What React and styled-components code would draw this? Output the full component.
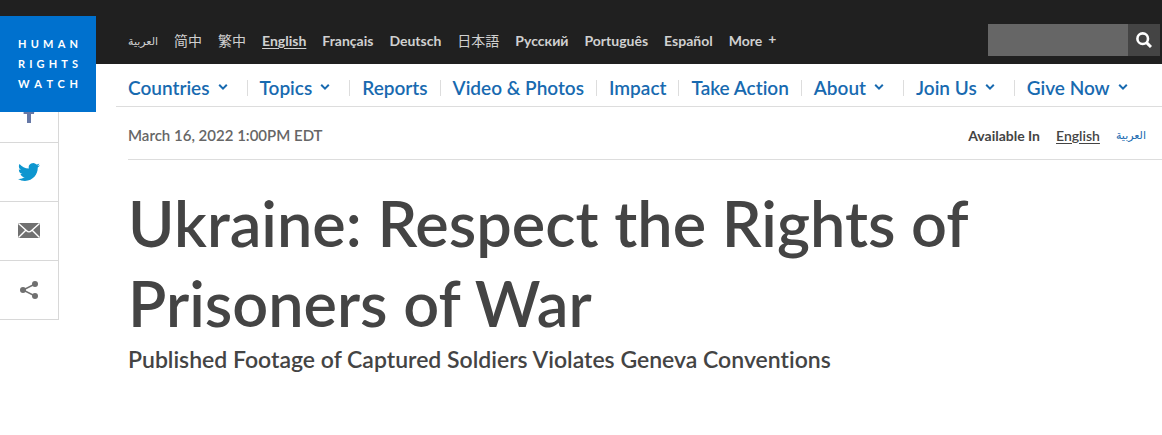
import React, { useState } from 'react'
import styled, { createGlobalStyle } from 'styled-components'

const languages = [
    { label: 'العربية', lang: 'ar' },
    { label: '简中', lang: 'zh-Hans' },
    { label: '繁中', lang: 'zh-Hant' },
    { label: 'English', lang: 'en', active: true },
    { label: 'Français', lang: 'fr' },
    { label: 'Deutsch', lang: 'de' },
    { label: '日本語', lang: 'ja' },
    { label: 'Русский', lang: 'ru' },
    { label: 'Português', lang: 'pt' },
    { label: 'Español', lang: 'es' },
]

const menu = [
    { label: 'Countries', sub: true },
    { label: 'Topics', sub: true },
    { label: 'Reports' },
    { label: 'Video & Photos' },
    { label: 'Impact' },
    { label: 'Take Action' },
    { label: 'About', sub: true },
    { label: 'Join Us', sub: true },
    { label: 'Give Now', sub: true },
]

const logoWords = ['HUMAN', 'RIGHTS', 'WATCH']

const Chevron = () => (
    <svg width="10" height="8" viewBox="0 0 10 8" aria-hidden="true">
        <path d="M1.2 0.8 L5 4.6 L8.8 0.8" fill="none" stroke="currentColor" strokeWidth="2" />
    </svg>
)

const FacebookIcon = () => (
    <svg width="12" height="20" viewBox="0 0 12 20" aria-hidden="true">
        <path d="M4 20V11H0.6V7.4H4V4.8C4 1.6 5.8 0 8.6 0H11.4V3.4H9.6C8.2 3.4 8 4 8 5.2V7.4H11.4L11 11H8V20Z" fill="#6678a6" />
    </svg>
)

const TwitterIcon = () => (
    <svg width="22" height="22" viewBox="0 0 24 24" aria-hidden="true">
        <path d="M23.95 4.57a10 10 0 0 1-2.82.77 4.96 4.96 0 0 0 2.16-2.72c-.95.55-2 .95-3.13 1.18a4.92 4.92 0 0 0-8.38 4.48C7.69 8.1 4.07 6.13 1.64 3.16a4.82 4.82 0 0 0-.67 2.48c0 1.71.87 3.21 2.19 4.1a4.9 4.9 0 0 1-2.23-.62v.06a4.92 4.92 0 0 0 3.95 4.83 5 5 0 0 1-2.21.08 4.94 4.94 0 0 0 4.6 3.42A9.87 9.87 0 0 1 0 19.54a13.99 13.99 0 0 0 7.55 2.21c9.05 0 14-7.5 14-13.98 0-.21 0-.42-.02-.63a9.94 9.94 0 0 0 2.46-2.55z" fill="#0d96cf" />
    </svg>
)

const MailIcon = () => (
    <svg width="22" height="16" viewBox="0 0 22 16" aria-hidden="true">
        <rect y="0" width="22" height="15" rx="1" fill="#707070" />
        <path d="M0.5 0.5L8.6 7.7Q11 10.1 13.4 7.7L21.5 0.5M0.5 14.5L7.8 7.3M21.5 14.5L14.2 7.3" fill="none" stroke="#fff" strokeWidth="1.4" />
    </svg>
)

const ShareIcon = () => (
    <svg width="18" height="18" viewBox="0 0 18 18" aria-hidden="true">
        <path d="M15 3L3 9L15 15" fill="none" stroke="#707070" strokeWidth="1.4" />
        <circle cx="15" cy="3" r="3" fill="#707070" />
        <circle cx="3" cy="9" r="3" fill="#707070" />
        <circle cx="15" cy="15" r="3" fill="#707070" />
    </svg>
)

const SearchIcon = () => (
    <svg width="16" height="16" viewBox="0 0 16 16" aria-hidden="true">
        <circle cx="6.7" cy="6.7" r="5.3" fill="none" stroke="#fff" strokeWidth="2.6" />
        <path d="M10.6 10.6L15 15" stroke="#fff" strokeWidth="3" />
    </svg>
)

const shareLinks = [
    { name: 'Facebook', icon: <FacebookIcon /> },
    { name: 'Twitter', icon: <TwitterIcon /> },
    { name: 'Email', icon: <MailIcon /> },
    { name: 'More sharing options', icon: <ShareIcon /> },
]

const App = () => {
    const [query, setQuery] = useState('')

    return (
        <>
            <GlobalStyle />
            <Header>
                <Logo href="#home" aria-label="Human Rights Watch">
                    {logoWords.map(word => (
                        <LogoRow key={word}>
                            {word.split('').map((letter, i) => <span key={i}>{letter}</span>)}
                        </LogoRow>
                    ))}
                </Logo>
                <Languages aria-label="Languages">
                    {languages.map(item => (
                        <LanguageLink key={item.lang} href={`#${item.lang}`} lang={item.lang} $active={item.active}>
                            {item.label}
                        </LanguageLink>
                    ))}
                    <MoreButton type="button">More<Plus>+</Plus></MoreButton>
                </Languages>
                <Search role="search" onSubmit={(e) => e.preventDefault()}>
                    <SearchInput
                        type="search"
                        aria-label="Search"
                        value={query}
                        onChange={(e) => setQuery(e.target.value)}
                    />
                    <SearchButton type="submit" aria-label="Submit search"><SearchIcon /></SearchButton>
                </Search>
            </Header>
            <Page>
                <Share aria-label="Share">
                    {shareLinks.map(item => (
                        <ShareLink key={item.name} href="#share" aria-label={item.name}>{item.icon}</ShareLink>
                    ))}
                </Share>
                <Content>
                    <Menu aria-label="Main">
                        {menu.map(item => (
                            <MenuItem key={item.label} href="#menu" $sub={item.sub}>
                                {item.label}
                                {item.sub && <Chevron />}
                            </MenuItem>
                        ))}
                    </Menu>
                    <Article>
                        <Meta>
                            <time dateTime="2022-03-16T13:00">March 16, 2022 1:00PM EDT</time>
                            <Available>
                                <strong>Available In</strong>
                                <CurrentLink href="#en">English</CurrentLink>
                                <ArabicLink href="#ar" lang="ar">العربية</ArabicLink>
                            </Available>
                        </Meta>
                        <Title>Ukraine: Respect the Rights of Prisoners of War</Title>
                        <Subtitle>Published Footage of Captured Soldiers Violates Geneva Conventions</Subtitle>
                    </Article>
                </Content>
            </Page>
        </>
    )
}

const GlobalStyle = createGlobalStyle`
    * {
        box-sizing: border-box;
    }
    body {
        margin: 0;
        background: #fff;
        color: #444;
        font-family: Lato, 'DejaVu Sans', 'Noto Sans CJK SC', sans-serif;
        font-variant-ligatures: none;
    }
    a {
        text-decoration: none;
    }
`

const Header = styled.header`
    position: relative;
    display: flex;
    align-items: center;
    height: 64px;
    padding: 16px 2px 0 128px;
    background: #202020;
`

const Logo = styled.a`
    position: absolute;
    top: 16px;
    left: 0;
    z-index: 1;
    display: flex;
    flex-direction: column;
    justify-content: center;
    width: 96px;
    height: 96px;
    padding: 0 18px;
    background: #0071ce;
    color: #fff;
    font-size: 11px;
    font-weight: 700;
    line-height: 20px;
`

const LogoRow = styled.span`
    display: flex;
    justify-content: space-between;
`

const Languages = styled.nav`
    display: flex;
    flex: 1;
    align-items: center;
    gap: 16px;
    padding-top: 2px;
    font-size: 14px;
    line-height: 20px;
    white-space: nowrap;
`

const LanguageLink = styled.a`
    color: #d0d0d0;
    font-weight: ${props => /^(ar|zh|ja)/.test(props.lang) ? 400 : 700};
    font-size: ${props => props.lang === 'ar' ? '11px' : 'inherit'};
    text-decoration: ${props => props.$active ? 'underline' : 'none'};
    text-underline-offset: 2px;
`

const MoreButton = styled.button`
    display: flex;
    gap: 6px;
    padding: 0;
    border: none;
    background: none;
    color: #d0d0d0;
    font: inherit;
    font-weight: 700;
    cursor: pointer;
`

const Plus = styled.span`
    line-height: 16px;
`

const Search = styled.form`
    display: flex;
    height: 32px;
`

const SearchInput = styled.input`
    width: 140px;
    padding: 0 8px;
    border: none;
    background: #666;
    color: #fff;
    font: inherit;
    font-size: 14px;
`

const SearchButton = styled.button`
    display: flex;
    align-items: center;
    justify-content: center;
    width: 32px;
    padding: 0;
    border: none;
    background: #444;
    cursor: pointer;
`

const Page = styled.div`
    display: flex;
    align-items: flex-start;
`

const Share = styled.aside`
    flex: none;
    width: 59px;
    margin: 20px 57px 0 0;
    border-right: 1px solid #d8d8d8;
`

const ShareLink = styled.a`
    display: flex;
    align-items: center;
    justify-content: center;
    height: 59px;
    border-bottom: 1px solid #d8d8d8;
`

const Content = styled.main`
    flex: 1;
`

const Menu = styled.nav`
    display: flex;
    align-items: center;
    height: 43px;
    padding-top: 6px;
    border-bottom: 1px solid #ddd;
    white-space: nowrap;
`

const MenuItem = styled.a`
    display: flex;
    align-items: center;
    gap: 8px;
    padding: 0 ${props => props.$sub ? '19px' : '12px'} 0 12px;
    color: #186ab0;
    font-size: 19px;
    font-weight: 600;
    line-height: 16px;

    & + & {
        border-left: 1px solid #ddd;
    }
`

const Article = styled.article`
    margin-left: 12px;
`

const Meta = styled.div`
    display: flex;
    align-items: center;
    justify-content: space-between;
    height: 53px;
    padding: 4px 16px 0 0;
    border-bottom: 1px solid #ddd;
    color: #666;
    font-size: 15px;
    font-weight: 600;
`

const Available = styled.div`
    display: flex;
    align-items: center;
    gap: 16px;
    color: #444;
    font-size: 14px;
    font-weight: 600;

    strong {
        font-weight: 700;
    }
`

const CurrentLink = styled.a`
    color: #444;
    text-decoration: underline;
    text-underline-offset: 2px;
`

const ArabicLink = styled.a`
    color: #186ab0;
    font-size: 11px;
    font-weight: 400;
`

const Title = styled.h1`
    max-width: 900px;
    margin: 23px 0 0;
    font-size: 63px;
    font-weight: 600;
    line-height: 80px;
`

const Subtitle = styled.h2`
    margin: 0;
    font-size: 23px;
    font-weight: 600;
    line-height: 32px;
`

export default App
